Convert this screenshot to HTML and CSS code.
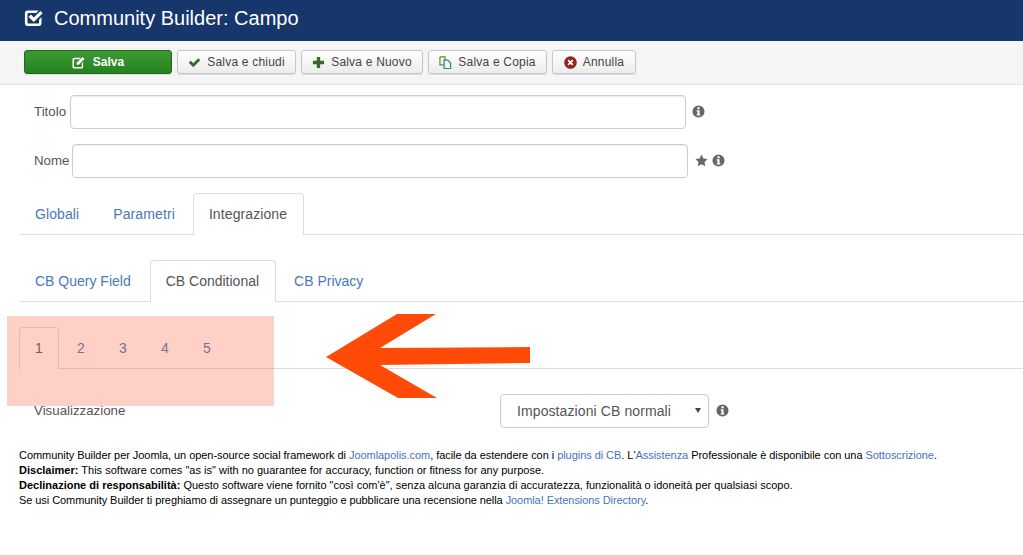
FILE: index.html
```html
<!DOCTYPE html>
<html lang="it">
<head>
<meta charset="utf-8">
<title>Community Builder: Campo</title>
<link rel="stylesheet" href="styles.css">
</head>
<body>
<header class="title-bar">
  <svg class="title-icon" viewBox="0 0 20 20"><path d="M3.800 2.500h10.700l-2.400 2.400H4.500a1 1 0 0 0-1 1v8.600a1 1 0 0 0 1 1h9.600a1 1 0 0 0 1-1v-2.900l2.400-2.400v5.900a2.900 2.900 0 0 1-2.900 2.900H3.800A2.900 2.900 0 0 1 .9 15.100V5.400a2.900 2.900 0 0 1 2.900-2.900z" fill="#fff"/><path d="M4.600 8.900l2.300-2.300 2.900 2.900 6.600-6.600 2.300 2.300-8.900 8.900z" fill="#fff"/></svg>
  <h1>Community Builder: Campo</h1>
</header>
<nav class="toolbar">
  <button class="btn btn-primary"><svg class="ico" viewBox="0 0 14 14"><path d="M2.500 2h7L8 3.500H2.800a.6.600 0 0 0-.6.600v7.100c0 .3.300.6.600.6h7.100c.3 0 .6-.3.600-.6V8l1.500-1.500v5a2 2 0 0 1-2 2H2.500a2 2 0 0 1-2-2V4a2 2 0 0 1 2-2z" fill="#fff"/><path d="M5 7.300L11.300 1 13.500 3.200 7.200 9.500H5z" fill="#fff"/></svg>Salva</button>
  <button class="btn"><svg class="ico" viewBox="0 0 14 14"><path d="M.8 7.300L3 5.100l2.700 2.700L11 2.500l2.200 2.200-7.500 7.500z" fill="#2f6d22"/></svg>Salva e chiudi</button>
  <button class="btn"><svg class="ico" viewBox="0 0 14 14"><path d="M5.200 1h3.600v4.200H13v3.600H8.800V13H5.200V8.800H1V5.200h4.200z" fill="#2f6d22"/></svg>Salva e Nuovo</button>
  <button class="btn"><svg class="ico" viewBox="0 0 14 14"><path d="M1 1h5.500v3.500M1 1v8.500h4" fill="none" stroke="#6b8a1f" stroke-width="1.300"/><path d="M5.500 4.500h4l3 3v6h-7z" fill="none" stroke="#2a8a86" stroke-width="1.300"/></svg>Salva e Copia</button>
  <button class="btn"><svg class="ico" viewBox="0 0 14 14"><circle cx="7" cy="7" r="6.800" fill="#97231a"/><path d="M4.500 4.500l5 5m0-5l-5 5" stroke="#fff" stroke-width="2"/></svg>Annulla</button>
</nav>
<main class="content">
  <div class="field field-title">
    <label class="field-label">Titolo</label>
    <input class="input" type="text">
    <svg class="info" viewBox="0 0 14 14"><use href="#i-info"/></svg>
  </div>
  <div class="field field-name">
    <label class="field-label">Nome</label>
    <input class="input" type="text">
    <svg class="star" viewBox="0 0 14 14"><path d="M7 .6l2 4.200 4.600.6-3.400 3.200.9 4.600L7 11.100l-4.100 2.100.9-4.600L.4 5.400 5 4.800z" fill="#666"/></svg>
    <svg class="info" viewBox="0 0 14 14"><use href="#i-info"/></svg>
  </div>
  <ul class="tabs tabs-main">
    <li class="tab">Globali</li>
    <li class="tab">Parametri</li>
    <li class="tab active">Integrazione</li>
  </ul>
  <ul class="tabs tabs-sub">
    <li class="tab">CB Query Field</li>
    <li class="tab active">CB Conditional</li>
    <li class="tab">CB Privacy</li>
  </ul>
  <ul class="tabs tabs-num">
    <li class="tab active">1</li>
    <li class="tab">2</li>
    <li class="tab">3</li>
    <li class="tab">4</li>
    <li class="tab">5</li>
  </ul>
  <div class="field-display">
    <label class="field-label display-label">Visualizzazione</label>
    <div class="select-wrap"><select class="select"><option>Impostazioni CB normali</option></select></div>
    <svg class="info" viewBox="0 0 14 14"><use href="#i-info"/></svg>
  </div>
  <footer class="legal">
    <div class="line-1">Community Builder per Joomla, un open-source social framework di <a href="#">Joomlapolis.com</a>, facile da estendere con i <a href="#">plugins di CB</a>. L'<a href="#">Assistenza</a> Professionale è disponibile con una <a href="#">Sottoscrizione</a>.</div>
    <div class="line-2"><strong>Disclaimer:</strong> This software comes "as is" with no guarantee for accuracy, function or fitness for any purpose.</div>
    <div><strong>Declinazione di responsabilità:</strong> Questo software viene fornito "così com'è", senza alcuna garanzia di accuratezza, funzionalità o idoneità per qualsiasi scopo.</div>
    <div class="line-4">Se usi Community Builder ti preghiamo di assegnare un punteggio e pubblicare una recensione nella <a href="#">Joomla! Extensions Directory</a>.</div>
  </footer>
</main>
<div class="highlight"></div>
<svg class="arrow" viewBox="0 0 204 86"><path d="M0 43L71 0h39L54 34l150-1v16L54 51l57 33H72z" fill="#ff4a08"/></svg>
<svg class="defs" width="0" height="0"><defs><symbol id="i-info" viewBox="0 0 14 14"><path fill-rule="evenodd" d="M7 .5a6.500 6.500 0 1 1 0 13 6.500 6.500 0 0 1 0-13zM5.800 2.500v2.100h2.400V2.500zM5 5.700v1.300h.9v3H5v1.400h4v-1.400h-.9V5.700z" fill="#666"/></symbol></defs></svg>
</body>
</html>
```
FILE: styles.css
```css
* { box-sizing: border-box; }
html, body { margin: 0; padding: 0; }
body {
  height: 555px;
  overflow: hidden;
  position: relative;
  background: #fff;
  color: #555;
  font-family: "Liberation Sans", Arial, sans-serif;
  font-size: 14px;
}
.title-bar {
  height: 41px;
  background: #17366c;
  color: #fff;
  display: flex;
  align-items: center;
  padding: 0 0 5px 24px;
}
.title-icon { width: 20px; height: 20px; margin-right: 10px; }
.title-bar h1 { margin: 0; font-size: 20px; font-weight: 400; line-height: 24px; }
.toolbar {
  height: 44px;
  background: #f5f5f5;
  border-bottom: 1px solid #e5e5e5;
  display: flex;
  gap: 5px;
  padding: 9px 0 0 24px;
  align-items: flex-start;
}
.btn {
  height: 24px;
  padding: 0;
  display: flex;
  align-items: center;
  justify-content: center;
  gap: 6px;
  background: linear-gradient(#fff, #ececec);
  border: 1px solid #c6c6c6;
  border-radius: 3px;
  color: #444;
  font: 12px "Liberation Sans", Arial, sans-serif;
  letter-spacing: .2px;
  white-space: nowrap;
  box-shadow: 0 1px 1px rgba(0,0,0,.1);
}
.btn:nth-child(2) { width: 119px; }
.btn:nth-child(3) { width: 122px; }
.btn:nth-child(4) { width: 119px; }
.btn:nth-child(5) { width: 84px; }
.btn-primary {
  width: 148px;
  background: linear-gradient(#3c9a35, #26801f);
  border-color: #1f6a1a;
  color: #fff;
  font-weight: 700;
  letter-spacing: 0;
  gap: 8px;
}
.ico { width: 13px; height: 13px; flex: none; }
.content { padding: 0; }
.field { display: flex; align-items: center; padding-left: 34px; height: 34px; }
.field-title { margin-top: 10px; }
.field-name { margin-top: 15px; }
.field-label { color: #555; font-size: 13.3px; margin-bottom: 2px; }
.field-title .field-label { margin-right: 3.7px; }
.field-name .field-label { margin-right: 2.8px; }
.input {
  width: 616px;
  height: 34px;
  border: 1px solid #ccc;
  border-radius: 4px;
  background: #fff;
  box-shadow: inset 0 1px 1px rgba(0,0,0,.075);
  margin-right: 6px;
}
.field-name .input { margin-right: 7px; }
.info { width: 13px; height: 13px; flex: none; margin-bottom: 2px; }
.star { width: 13px; height: 13px; flex: none; margin: 0 4px 2px 0; }
.tabs {
  list-style: none;
  display: flex;
  gap: 2px;
  margin: 0 0 0 19px;
  padding: 0;
  height: 42px;
  border-bottom: 1px solid #ddd;
}
.tab {
  color: #4978b8;
  line-height: 20px;
  padding: 10px 15px 11px;
  border: 1px solid transparent;
  border-bottom: 0;
  border-radius: 4px 4px 0 0;
  height: 42px;
}
.tab.active {
  color: #555;
  background: #fff;
  border-color: #ddd;
}
.tabs-main { margin-top: 15px; }
.tabs-main .tab { letter-spacing: .1px; }
.tabs-main .tab.active { padding-right: 16px; }
.tabs-sub { margin-top: 25px; }
.tabs-sub .tab { padding-right: 16px; }
.tabs-num { margin-top: 25px; }
.tabs-num .tab { padding-left: 0; padding-right: 0; width: 40px; text-align: center; }
.field-display { display: flex; align-items: center; height: 34px; margin-top: 25px; padding-left: 34px; }
.display-label { width: 466px; margin: 0 0 2px; }
.select-wrap { position: relative; width: 209px; height: 34px; margin-right: 7px; }
.select-wrap::after {
  content: "";
  position: absolute;
  right: 8px;
  top: 14px;
  border-style: solid;
  border-width: 5px 3px 0;
  border-color: #444 transparent transparent;
}
.select {
  appearance: none;
  -webkit-appearance: none;
  width: 100%;
  height: 34px;
  border: 1px solid #ccc;
  border-radius: 4px;
  background: #fff;
  color: #555;
  font: 14px "Liberation Sans", Arial, sans-serif;
  letter-spacing: .1px;
  padding: 0 12px 0 16px;
}
.legal {
  margin: 20px 0 0 19px;
  color: #000;
  font-size: 11px;
  line-height: 15px;
}
.legal a { color: #3f74bb; text-decoration: none; }
.line-1 { letter-spacing: -.05px; }
.line-2 { letter-spacing: .01px; }
.line-4 { letter-spacing: -.07px; }
.highlight {
  position: absolute;
  left: 7px;
  top: 316px;
  width: 267px;
  height: 90px;
  background: rgba(255,90,50,.28);
}
.arrow { position: absolute; left: 326px; top: 314px; width: 204px; height: 86px; }
.defs { position: absolute; }
```
